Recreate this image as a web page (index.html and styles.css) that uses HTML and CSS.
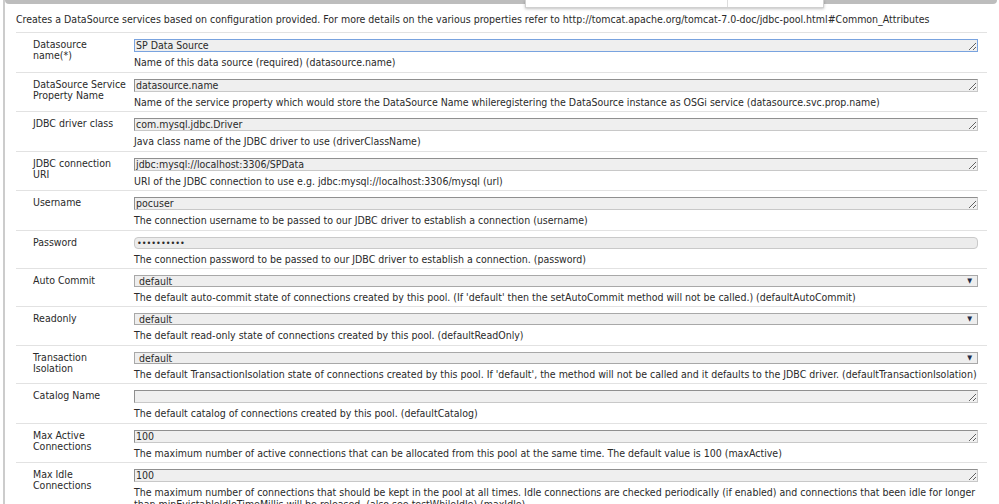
FILE: index.html
```html
<!DOCTYPE html>
<html>
<head>
<meta charset="utf-8">
<link rel="stylesheet" href="styles.css">
</head>
<body>
<div class="page">
  <div class="topbar"></div>
  <div class="popup"><span class="popup-left"></span><span class="popup-right"></span></div>
  <div class="content">
    <p class="intro">Creates a DataSource services based on configuration provided. For more details on the various properties refer to http://tomcat.apache.org/tomcat-7.0-doc/jdbc-pool.html#Common_Attributes</p>
    <div class="rows">
      <div class="row">
        <div class="label">Datasource<br>name(*)</div>
        <div class="field"><textarea class="ta focus">SP Data Source</textarea><div class="desc">Name of this data source (required) (datasource.name)</div></div>
      </div>
      <div class="row">
        <div class="label">DataSource Service<br>Property Name</div>
        <div class="field"><textarea class="ta">datasource.name</textarea><div class="desc">Name of the service property which would store the DataSource Name whileregistering the DataSource instance as OSGi service (datasource.svc.prop.name)</div></div>
      </div>
      <div class="row">
        <div class="label">JDBC driver class</div>
        <div class="field"><textarea class="ta">com.mysql.jdbc.Driver</textarea><div class="desc">Java class name of the JDBC driver to use (driverClassName)</div></div>
      </div>
      <div class="row">
        <div class="label">JDBC connection<br>URI</div>
        <div class="field"><textarea class="ta">jdbc:mysql://localhost:3306/SPData</textarea><div class="desc">URI of the JDBC connection to use e.g. jdbc:mysql://localhost:3306/mysql (url)</div></div>
      </div>
      <div class="row">
        <div class="label">Username</div>
        <div class="field"><textarea class="ta">pocuser</textarea><div class="desc">The connection username to be passed to our JDBC driver to establish a connection (username)</div></div>
      </div>
      <div class="row row-short">
        <div class="label">Password</div>
        <div class="field"><input class="pw" type="password" value="xxxxxxxxxx"><div class="desc">The connection password to be passed to our JDBC driver to establish a connection. (password)</div></div>
      </div>
      <div class="row row-sel">
        <div class="label">Auto Commit</div>
        <div class="field"><div class="sel"><span>default</span><span class="arrow">&#9660;</span></div><div class="desc">The default auto-commit state of connections created by this pool. (If 'default' then the setAutoCommit method will not be called.) (defaultAutoCommit)</div></div>
      </div>
      <div class="row row-sel">
        <div class="label">Readonly</div>
        <div class="field"><div class="sel"><span>default</span><span class="arrow">&#9660;</span></div><div class="desc">The default read-only state of connections created by this pool. (defaultReadOnly)</div></div>
      </div>
      <div class="row row-sel">
        <div class="label">Transaction<br>Isolation</div>
        <div class="field"><div class="sel"><span>default</span><span class="arrow">&#9660;</span></div><div class="desc">The default TransactionIsolation state of connections created by this pool. If 'default', the method will not be called and it defaults to the JDBC driver. (defaultTransactionIsolation)</div></div>
      </div>
      <div class="row">
        <div class="label">Catalog Name</div>
        <div class="field"><textarea class="ta"></textarea><div class="desc">The default catalog of connections created by this pool. (defaultCatalog)</div></div>
      </div>
      <div class="row">
        <div class="label">Max Active<br>Connections</div>
        <div class="field"><textarea class="ta">100</textarea><div class="desc">The maximum number of active connections that can be allocated from this pool at the same time. The default value is 100 (maxActive)</div></div>
      </div>
      <div class="row">
        <div class="label">Max Idle<br>Connections</div>
        <div class="field"><textarea class="ta">100</textarea><div class="desc">The maximum number of connections that should be kept in the pool at all times. Idle connections are checked periodically (if enabled) and connections that been idle for longer<br>than minEvictableIdleTimeMillis will be released. (also see testWhileIdle) (maxIdle)</div></div>
      </div>
    </div>
  </div>
</div>
</body>
</html>
```
FILE: styles.css
```css
html, body {
  margin: 0;
  padding: 0;
  background: #ffffff;
  overflow: hidden;
}
body {
  font-family: "DejaVu Sans Condensed", "DejaVu Sans", Verdana, sans-serif;
  font-size: 10.5px;
  color: #2a2a2a;
}
.page {
  position: relative;
  margin-left: 3px;
  border-left: 2px solid #cccccc;
  min-height: 504px;
}
.topbar {
  height: 4px;
  margin-right: 2px;
  background: #bdbdbd;
  border-radius: 0 0 4px 4px;
}
.popup {
  position: absolute;
  top: 0;
  left: 520px;
  width: 297px;
  height: 7px;
  background: #ffffff;
  border: 1px solid #d0d0d0;
  border-top: none;
  box-shadow: 0 1px 3px rgba(0,0,0,0.25);
  display: flex;
}
.popup-left {
  width: 201px;
  border-right: 1px solid #dddddd;
}
.content {
  padding: 0 12px 0 11px;
}
.intro {
  margin: 0;
  padding: 9px 0 7px 0;
  line-height: 12px;
  white-space: nowrap;
}
.row {
  display: grid;
  grid-template-columns: 118px 1fr;
  border-top: 1px solid #e2e2e2;
  padding: 6px 9px 3.5px 0;
}
.label {
  padding-left: 17px;
  line-height: 11px;
  white-space: nowrap;
}
.field {
  display: flex;
  flex-direction: column;
  min-width: 0;
}
.ta {
  display: block;
  box-sizing: border-box;
  width: 100%;
  height: 13px;
  margin: 0;
  padding: 0 1px;
  font: inherit;
  line-height: 11px;
  color: #2a2a2a;
  background: #efefef;
  border: 1px solid;
  border-color: #8f8f8f #c8c8c8 #c8c8c8 #8f8f8f;
  overflow: hidden;
  resize: vertical;
}
.ta.focus {
  border: 1px solid #79a3df;
  outline: none;
}
.pw {
  display: block;
  box-sizing: border-box;
  width: 100%;
  height: 12px;
  margin: 0;
  padding: 0 2px;
  font: inherit;
  font-size: 9px;
  color: #2a2a2a;
  background: #ececec;
  border: 1px solid #c9c9c9;
  border-radius: 4px;
}
.sel {
  box-sizing: border-box;
  height: 12px;
  display: flex;
  align-items: center;
  justify-content: space-between;
  padding: 0 5px 0 4px;
  background: #eeeeee;
  border: 1px solid #a8a8a8;
  line-height: 10px;
}
.arrow {
  font-size: 7px;
  color: #1f2d4a;
}
.desc {
  margin-top: 4px;
  line-height: 12px;
  white-space: nowrap;
}
.row-short {
  padding-bottom: 3px;
}
```
